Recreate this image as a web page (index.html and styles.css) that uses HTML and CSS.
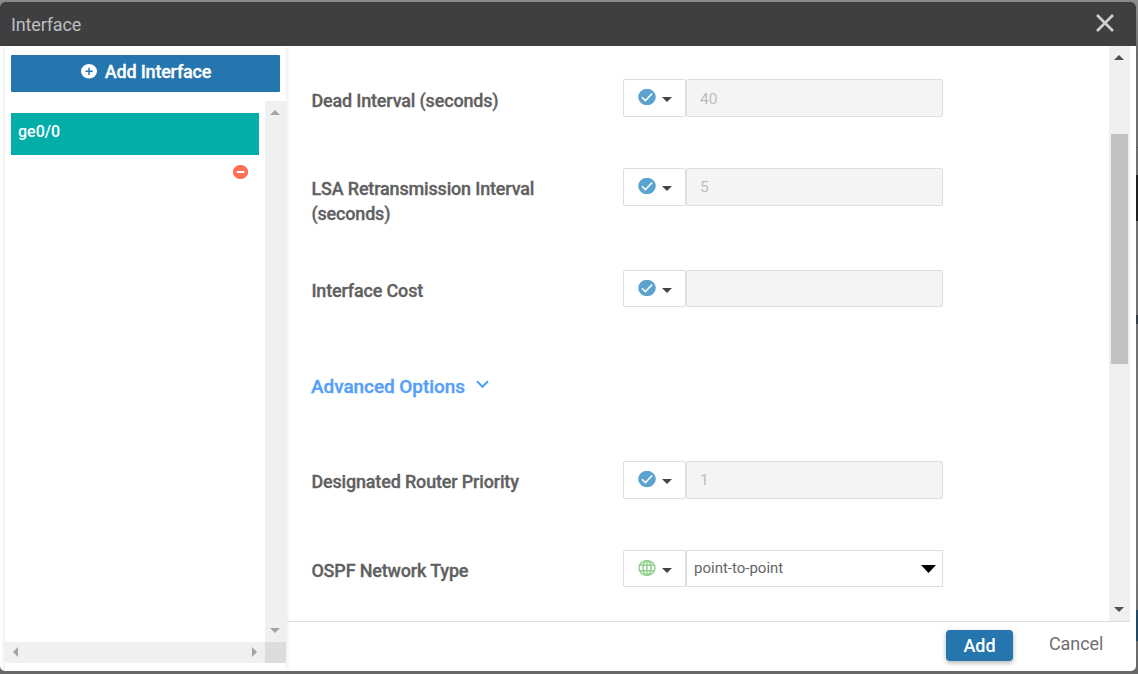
FILE: index.html
```html
<!DOCTYPE html>
<html lang="en">
<head>
<meta charset="utf-8">
<title>Interface</title>
<link rel="stylesheet" href="styles.css">
</head>
<body>
<svg class="defs" width="0" height="0">
  <symbol id="check" viewBox="0 0 18 16"><ellipse cx="9" cy="8" rx="8.8" ry="8.2" fill="#5ba3cf"/><path d="M4 8.2l3.4 3.4 6.8-7" fill="none" stroke="#fff" stroke-width="1.5"/></symbol>
  <symbol id="globe" viewBox="0 0 18 16"><g fill="none" stroke="#93cf8c" stroke-width="1.5"><ellipse cx="9" cy="8" rx="8" ry="7.3"/><ellipse cx="9" cy="8" rx="4" ry="7.3"/><path d="M9 .7v14.6M1.5 5.3h15M1.5 10.7h15"/></g></symbol>
  <symbol id="caret" viewBox="0 0 10 5"><path d="M0 0h10L5 5z"/></symbol>
</svg>
<div class="backdrop-marks"><i class="mark mark-line"></i><i class="mark mark-dark"></i><i class="mark mark-dot"></i><i class="mark mark-blue"></i></div>
<div class="modal">
  <header class="header">
    <h1 class="title">Interface</h1>
    <svg class="close" width="18" height="18" viewBox="0 0 18 18"><path d="M1 1l16 16M17 1L1 17" fill="none" stroke="#d0d0d0" stroke-width="2.6"/></svg>
  </header>
  <div class="body">
    <aside class="sidebar">
      <button class="add-interface">
        <svg width="16" height="15" viewBox="0 0 16 15"><ellipse cx="8" cy="7.3" rx="8" ry="7.3" fill="#fff"/><path d="M8 3.7v7.2M4.4 7.3h7.2" stroke="#2575ae" stroke-width="1.5"/></svg>
        <span>Add Interface</span>
      </button>
      <div class="list-area">
        <div class="list">
          <div class="item">ge0/0</div>
          <svg class="remove" width="15" height="14" viewBox="0 0 15 14"><ellipse cx="7.5" cy="7" rx="7.6" ry="7.1" fill="#ff6e57"/><path d="M3.6 7h7.8" stroke="#fff" stroke-width="1.8"/></svg>
        </div>
        <div class="vbar">
          <svg class="arrow" width="10" height="5" viewBox="0 0 10 5"><path d="M0 5h10L5 0z"/></svg>
          <svg class="arrow" width="10" height="5"><use href="#caret"/></svg>
        </div>
        <div class="hbar">
          <svg class="arrow" width="5" height="10" viewBox="0 0 5 10"><path d="M5 0v10L0 5z"/></svg>
          <svg class="arrow" width="5" height="10" viewBox="0 0 5 10"><path d="M0 0v10l5-5z"/></svg>
        </div>
        <div class="corner"></div>
      </div>
    </aside>
    <section class="main">
      <div class="scroll">
        <div class="form">
          <div class="row">
            <label class="label label-dead">Dead Interval (seconds)</label>
            <div class="scope"><svg class="kind" width="18" height="16"><use href="#check"/></svg><svg class="caret" width="10" height="5"><use href="#caret"/></svg></div>
            <div class="input">40</div>
          </div>
          <div class="row row-tall">
            <label class="label label-lsa">LSA Retransmission Interval (seconds)</label>
            <div class="scope"><svg class="kind" width="18" height="16"><use href="#check"/></svg><svg class="caret" width="10" height="5"><use href="#caret"/></svg></div>
            <div class="input input-up">5</div>
          </div>
          <div class="row">
            <label class="label">Interface Cost</label>
            <div class="scope short"><svg class="kind" width="18" height="16"><use href="#check"/></svg><svg class="caret" width="10" height="5"><use href="#caret"/></svg></div>
            <div class="input short"></div>
          </div>
          <div class="advanced"><span>Advanced Options</span><svg width="13" height="9" viewBox="0 0 13 9"><path d="M1 1.2l5.5 5.6L12 1.2" fill="none" stroke="#4f9ff8" stroke-width="2"/></svg></div>
          <div class="row">
            <label class="label">Designated Router Priority</label>
            <div class="scope"><svg class="kind" width="18" height="16"><use href="#check"/></svg><svg class="caret" width="10" height="5"><use href="#caret"/></svg></div>
            <div class="input input-up">1</div>
          </div>
          <div class="row row-last">
            <label class="label">OSPF Network Type</label>
            <div class="scope short"><svg class="kind" width="18" height="16"><use href="#globe"/></svg><svg class="caret" width="10" height="5"><use href="#caret"/></svg></div>
            <div class="input select short"><span>point-to-point</span><svg width="15" height="8" viewBox="0 0 15 8"><path d="M0 0h15L7.5 8z" fill="#000"/></svg></div>
          </div>
        </div>
        <div class="track">
          <svg class="arrow-up" width="10" height="5" viewBox="0 0 10 5"><path d="M0 5h10L5 0z"/></svg>
          <div class="thumb"></div>
          <svg class="arrow-down" width="10" height="5"><use href="#caret"/></svg>
        </div>
      </div>
      <footer class="footer">
        <button class="add">Add</button>
        <button class="cancel">Cancel</button>
      </footer>
    </section>
  </div>
</div>
</body>
</html>
```
FILE: styles.css
```css
* { box-sizing: border-box; }
body { display: flow-root; margin: 0; width: 1138px; height: 674px; overflow: hidden; background: linear-gradient(#8c8c8c, #6d6d6d 8%, #777 85%, #686868); font-family: Roboto, "Liberation Sans", sans-serif; color: #606060; position: relative; }
svg { display: block; flex: none; }
.defs { position: absolute; }
button { border: 0; margin: 0; padding: 0; font-family: inherit; }
.mark { position: absolute; right: 0; width: 2px; }
.mark-line { top: 147px; height: 1px; background: #555; }
.mark-dark { top: 175px; height: 46px; background: #202020; }
.mark-dot { top: 315px; height: 9px; background: #353d49; }
.mark-blue { top: 610px; height: 31px; background: #204b68; }
.modal { position: relative; width: 1136px; height: 669px; margin-top: 2px; border-radius: 5px; background: #fff; overflow: hidden; display: flex; flex-direction: column; }
.header { height: 44px; flex: none; background: #3e3f41; display: flex; align-items: center; justify-content: space-between; padding: 0 22px 2px 11px; }
.title { margin: 0; padding-top: 3px; font-size: 18px; font-weight: 400; letter-spacing: -.15px; color: #bebebe; }
.body { flex: 1; display: flex; min-height: 0; }
.sidebar { width: 281px; margin-left: 5px; padding-top: 9px; background: #fff; box-shadow: 0 0 5px rgba(0,0,0,.13); display: flex; flex-direction: column; }
.add-interface { height: 37px; width: 269px; margin-left: 6px; background: #2575ae; border-radius: 1px; color: #fff; font-size: 18px; font-weight: 500; letter-spacing: -.2px; -webkit-text-stroke: .3px; display: flex; align-items: center; justify-content: center; gap: 8px; padding: 0 0 4px 1px; }
.list-area { margin-top: 9px; display: grid; grid-template-columns: 260px 21px; grid-template-rows: 541px 21px; }
.list { padding: 12px 6px 0; }
.item { height: 42px; background: #03aea8; color: #fff; font-size: 16px; font-weight: 500; line-height: 38px; padding-left: 7px; }
.remove { margin: 10px 0 0 222px; }
.vbar, .hbar { background: #f0f0f0; display: flex; align-items: center; justify-content: space-between; }
.vbar { flex-direction: column; padding: 9px 1px 9px 0; }
.hbar { padding: 0 8px 1px; }
.arrow { fill: #a3a3a3; }
.corner { background: #dcdcdc; }
.main { flex: 1; margin-left: 1px; display: flex; flex-direction: column; }
.scroll { height: 575px; display: flex; }
.form { width: 822px; padding: 33px 0 0 24px; }
.row { height: 89px; display: grid; grid-template-columns: 312px 63px 257px; align-items: start; }
.row-tall { height: 102px; }
.row-last { height: 60px; }
.label { font-size: 18px; font-weight: 500; letter-spacing: -.17px; -webkit-text-stroke: .3px; line-height: 25px; padding: 8px 60px 0 .4px; }
.label-dead { padding-top: 9px; }
.scope { height: 38px; border: 1px solid #dedede; border-radius: 2px; display: flex; gap: 6px; padding: 9px 0 0 14px; }
.caret { margin-top: 8px; fill: #444; }
.input { height: 38px; border: 1px solid #dedede; border-radius: 2px; background: #f4f4f4; font-size: 15.5px; line-height: 38px; padding-left: 13px; color: #bdbdbd; }
.input-up { line-height: 36px; }
.short { height: 37px; }
.select { border-radius: 0; background: #fff; color: #666; font-size: 15px; line-height: 35px; padding: 0 6px 0 7px; display: flex; justify-content: space-between; align-items: center; }
.advanced { height: 102px; padding-top: 15px; display: flex; gap: 11px; color: #559ffa; font-size: 19px; font-weight: 500; letter-spacing: -.07px; -webkit-text-stroke: .35px; line-height: 26px; }
.advanced svg { margin-top: 6px; }
.track { width: 21px; height: 575px; background: #f0f0f0; padding: 9px 2px 9px; display: flex; flex-direction: column; align-items: center; }
.arrow-up, .arrow-down { fill: #505050; margin-right: 1px; }
.thumb { width: 17px; height: 230px; margin-top: 74px; background: #c1c1c1; }
.arrow-down { margin-top: auto; }
.footer { width: 843px; flex: 1; border-top: 1px solid #dedede; display: flex; align-items: flex-start; padding: 8px 0 0 659px; }
.add { width: 67px; height: 31px; border-radius: 4px; background: #2575ae; color: #fff; font-size: 18px; font-weight: 500; box-shadow: 0 2px 5px rgba(0,0,0,.3); }
.cancel { margin-left: 36px; background: none; color: #6f6f6f; font-size: 18px; line-height: 27px; letter-spacing: -.1px; }
```
